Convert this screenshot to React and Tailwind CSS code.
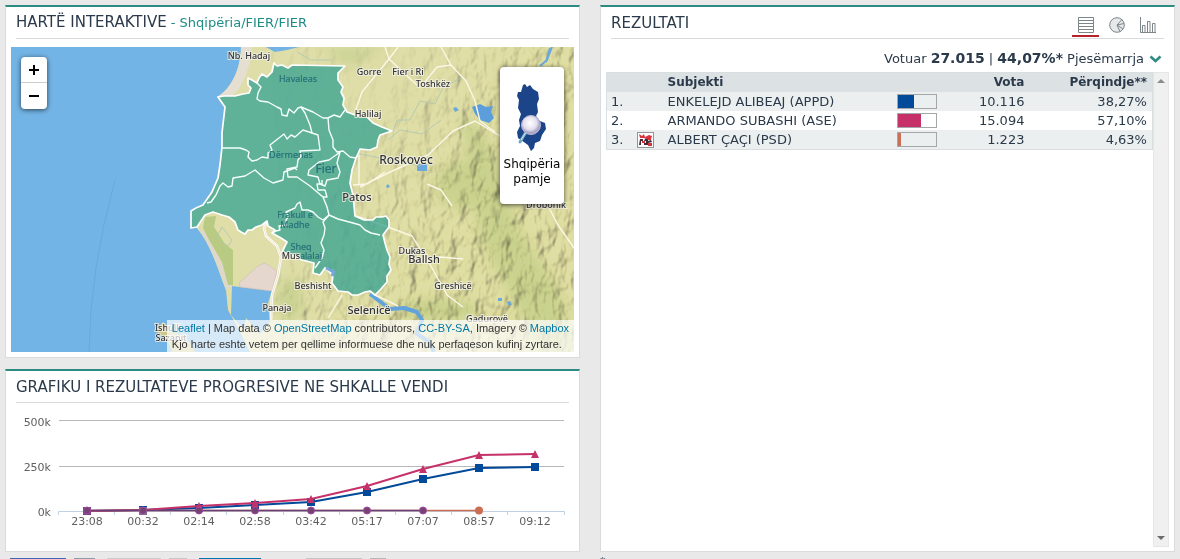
import React, { useState } from "react";

const results = [
  { name: "ENKELEJD ALIBEAJ (APPD)", votes: "10.116", percent: "38,27%", bar: 16, color: "#004a99" },
  { name: "ARMANDO SUBASHI (ASE)", votes: "15.094", percent: "57,10%", bar: 23, color: "#c63169" },
  { name: "ALBERT ÇAÇI (PSD)", votes: "1.223", percent: "4,63%", bar: 3, color: "#c8705a", logo: true },
];

const places = [
  { name: "Nb. Hadaj", x: 249, y: 59, size: 9 },
  { name: "Gorre", x: 369, y: 75, size: 9 },
  { name: "Fier i Ri", x: 408, y: 75, size: 9 },
  { name: "Toshkëz", x: 433, y: 87, size: 9 },
  { name: "Halilaj", x: 368, y: 117, size: 9 },
  { name: "Roskovec", x: 406, y: 164, size: 12 },
  { name: "Patos", x: 357, y: 201, size: 11 },
  { name: "Drobonik", x: 546, y: 208, size: 9 },
  { name: "Dukas", x: 412, y: 254, size: 9 },
  { name: "Ballsh", x: 424, y: 263, size: 11 },
  { name: "Greshicë", x: 453, y: 289, size: 9 },
  { name: "Beshisht", x: 313, y: 289, size: 9 },
  { name: "Selenicë", x: 369, y: 314, size: 11 },
  { name: "Panaja", x: 277, y: 311, size: 9 },
  { name: "Gadurovë", x: 487, y: 322, size: 9 },
  { name: "Ishulli", x: 168, y: 331, size: 9 },
  { name: "Sazanit", x: 171, y: 341, size: 9 },
  { name: "Mus", x: 291, y: 259, size: 9 },
];

const regionNames = [
  { name: "Havaleas", x: 298, y: 82, size: 9 },
  { name: "Dërmenas", x: 291, y: 158, size: 9 },
  { name: "Fier", x: 326, y: 173, size: 12 },
  { name: "Frakull e", x: 295, y: 218, size: 9 },
  { name: "Madhe", x: 295, y: 228, size: 9 },
  { name: "Sheq", x: 301, y: 250, size: 9 },
  { name: "alalaj", x: 311, y: 259, size: 9 },
];

const regionOutline =
  "M218 97L224 96L235 96L243 94L249 93L251 88L248 85V78L252 80L257 83L259 78L262 74L267 77L272 72L274 63L277 66L282 65L288 68L292 65L345 66L338 73L338 80L343 87L341 92L344 98L343 105L347 112L358 116L367 117L373 123L382 127L392 131L380 135L378 140L377 147L370 150L360 149L358 154L356 158L352 170L350 183L353 195L355 216L364 220L373 220L376 217L382 217L386 216L389 220L389 227L383 235L385 243L387 250L390 257L389 264L391 270L387 276L387 282L381 289L375 295L370 291L365 292L358 295L352 295L348 292L338 291L332 283L333 275L325 268L320 275L313 273L314 263L302 260L292 255L282 252L287 242L281 238L272 233L275 230L268 226L267 221L262 225L256 227L252 230H248L245 234L241 232L238 230L235 222L229 217L222 215L213 212L205 215L197 227L191 228V211L196 208L203 205L212 192L218 178L220 165L222 147V133L225 107Z";

const borders = [
  "M257 83L261 87L258 93L257 99L260 101L268 102L277 107L281 109L282 115L287 116L289 109L294 113L298 108L301 107L313 112L323 118L328 118L334 115L340 117L345 110",
  "M301 107L305 113L310 125L312 133L318 135L320 150L300 151L301 156L298 160L297 167L287 169L288 177L297 177L310 186L323 197L327 207L329 215",
  "M312 133L303 130L295 137L291 135L287 139L284 134L270 145L272 150L268 153V158L262 157L257 160L252 161L248 157L249 152L246 150L240 148H222",
  "M328 118L329 130L333 140L333 147L337 152L343 151L350 157L356 158",
  "M340 152L337 163L340 172L338 178L327 180L325 186L320 184L318 177L308 175L309 170L319 162L329 160L336 155Z",
  "M322 180V184H317L318 190L325 190L327 197L323 197",
  "M329 215L338 219L353 223L360 225L365 230L371 233L380 235",
  "M329 215L323 222L325 228L324 235L321 243L324 250L322 258L315 268",
  "M272 233L276 231L280 230L279 226L287 225L286 220L289 216L286 212L295 208L297 204L300 202L302 210L308 210L313 212L318 217L323 220L329 215",
  "M207 203L211 202L216 195L220 186L223 183L228 187L232 186L233 178L245 176L255 170L264 178L273 183L283 180L284 172L295 168L297 170",
];

const times = ["23:08", "00:32", "02:14", "02:58", "03:42", "05:17", "07:07", "08:57", "09:12"];
const reds = [511, 510, 506, 503, 499, 486, 469, 455, 454];
const blues = [511, 510, 508, 505, 502, 492, 479, 468, 467];
const xAt = (i) => 87 + i * 56;
const toPoints = (values) => values.map((y, i) => `${xAt(i)},${y}`).join(" ");

function Panel({ title, extra, tools, children }) {
  return (
    <section className="flex flex-col border border-t-2 border-[#d9dcdc] border-t-[#2e8b82] bg-white">
      <header className="mx-[10px] flex h-8 shrink-0 items-center justify-between border-b border-[#d9dcdc]">
        <h2 className="text-[15px] leading-4 whitespace-nowrap">
          {title}
          {extra}
        </h2>
        {tools}
      </header>
      {children}
    </section>
  );
}

function TerrainMap() {
  return (
    <svg viewBox="11 47 563 305" preserveAspectRatio="xMidYMid slice" className="block h-full w-full" role="img" aria-label="Harta e Fierit">
      <defs>
        <filter id="relief" x="0" y="0" width="100%" height="100%">
          <feTurbulence type="fractalNoise" baseFrequency="0.075 0.045" numOctaves="3" seed="8" />
          <feColorMatrix type="matrix" values="0 0 0 0 0  0 0 0 0 0  0 0 0 0 0  1 0 0 0 0" />
          <feDiffuseLighting surfaceScale="8" diffuseConstant="1.2" lightingColor="#fffae0">
            <feDistantLight azimuth="215" elevation="58" />
          </feDiffuseLighting>
        </filter>
        <linearGradient id="rise" gradientUnits="userSpaceOnUse" x1="345" y1="150" x2="460" y2="225">
          <stop offset="0" stopColor="#fff" stopOpacity="0.08" />
          <stop offset="1" stopColor="#fff" stopOpacity="0.5" />
        </linearGradient>
        <mask id="hills" maskUnits="userSpaceOnUse" x="11" y="47" width="563" height="305">
          <path d="M270 47H574V352H262L270 320L284 255Z" fill="url(#rise)" />
        </mask>
        <filter id="soft">
          <feGaussianBlur stdDeviation="6" />
        </filter>
      </defs>

      <rect x="11" y="47" width="563" height="305" fill="#73b4e6" />
      <path d="M115 180Q90 270 89 352" fill="none" stroke="#68a9db" />
      <path d="M241 47C241 70 230 90 217 97L225 107L222 147L218 178L205 205L191 212V228L196 227C212 246 218 270 226 290L228 310L237 326L250 352H574V47Z" fill="#dfdea9" />
      <path d="M241 47C241 70 230 90 217 97L232 96C243 87 250 69 252 47Z" fill="#e4dfd0" />
      <path d="M266 47L275 52L287 50L299 47Z" fill="#73b4e6" />
      <g filter="url(#soft)" fill="#bccb85" opacity="0.6">
        <path d="M460 110L490 140L520 230L560 290L574 352H540L480 240Z" />
        <ellipse cx="465" cy="185" rx="30" ry="25" />
        <ellipse cx="440" cy="310" rx="40" ry="12" />
        <path d="M320 50L390 47L350 65Z" />
        <ellipse cx="290" cy="300" rx="12" ry="22" />
      </g>
      <g style={{ mixBlendMode: "multiply" }}>
        <rect x="262" y="47" width="312" height="305" filter="url(#relief)" mask="url(#hills)" />
      </g>
      <path d="M197 227C212 246 218 270 226 290L232 286L222 262L205 232Z" fill="#ddd8c8" />
      <path d="M205 217L216 216L214 227L225 244L233 250V285H228L222 262L208 238L203 228Z" fill="#b9cb83" />
      <path d="M232 286L272 291L268 303L270 322L260 334L246 318L244 330L231 315Z" fill="#73b4e6" />
      <path d="M239 283L258 266L265 263L277 271L272 291L240 287Z" fill="#e5d6ce" stroke="#cdbdb7" strokeWidth="0.6" />
      <path d="M155 330L163 322L173 330L190 342L195 352H172L168 342Z" fill="#cbc88e" />
      <path d="M472 107L480 104L486 107L493 106L491 112L494 118L489 123L480 120L475 114Z" fill="#5c9edb" />
      <path d="M417 164H427V171H417ZM453 108L456 107L459 110L455 112ZM498 298H502V301H498ZM507 302L510 301L512 305H508ZM386 186L388 184L390 187L387 188Z" fill="#6ba8dc" />
      <path d="M552 47L547 60L540 66M550 48L546 62" fill="none" stroke="#6ba8dc" strokeWidth="2" />
      <path d="M370 294L382 303L390 309L404 308L417 312L422 320L417 334L428 341L434 352" fill="none" stroke="#62a3dc" strokeWidth="4" strokeLinejoin="round" />
      <g fill="none" stroke="#abc5b3" strokeWidth="0.8">
        <path d="M393 132L397 120L410 120L420 101L435 104L443 88L462 77M388 140L400 130L422 134L441 120M297 52L311 60H331M360 154L420 166L431 150" />
        <path d="M215 240L222 227L232 240L228 246L221 241" />
      </g>
      <g fill="none" stroke="#faf7e5" strokeWidth="1.4" strokeLinejoin="round">
        <path d="M398 47L389 59L362 92L355 112M389 59L420 88M389 59L385 47M441 47L451 65L466 81L475 101L480 121L495 132M451 65L437 67L425 82" />
        <path d="M360 187L390 172L428 155L453 131L475 121L510 142M353 185L367 184L385 172M356 216L385 226L412 236L432 268L447 295L463 307" />
        <path d="M415 259L440 257L463 259M427 184L441 190L452 206M342 295L328 318M375 295L398 306M545 200L558 225L574 248M359 155V185" />
      </g>
      <path d="M267 221L264 228L266 236L277 246L281 257L278 275L272 295L271 320" fill="none" stroke="#fff" strokeWidth="2.5" />
      <path d="M267 221L264 228L266 236L277 246L281 257L278 275L272 295L271 320" fill="none" stroke="#e5d7c1" strokeWidth="0.7" />

      <path d={regionOutline} fill="#32a090" fillOpacity="0.74" stroke="#fff" strokeWidth="1.7" strokeLinejoin="round" />
      {borders.map((d) => (
        <path key={d} d={d} fill="none" stroke="#f4fffb" strokeWidth="1.4" strokeLinejoin="round" />
      ))}
      <path d="M326 268L334 272L332 276" fill="none" stroke="#73a7d8" strokeWidth="3" />

      <g fontFamily="'Noto Sans', sans-serif" textAnchor="middle">
        {regionNames.map((p) => (
          <text key={p.name} x={p.x} y={p.y} fontSize={p.size} fill="#27717a" stroke="#27717a" strokeWidth="0.2">{p.name}</text>
        ))}
        {places.map((p) => (
          <text key={p.name} x={p.x} y={p.y} fontSize={p.size} fontWeight="500" fill="#33333b" stroke="#f4f2e4" strokeWidth="2" strokeOpacity="0.8" paintOrder="stroke">{p.name}</text>
        ))}
      </g>
    </svg>
  );
}

function AlbaniaIcon() {
  return (
    <svg viewBox="500 66 64 90" className="h-[90px] w-16" aria-hidden="true">
      <defs>
        <radialGradient id="lens" cx="45%" cy="40%">
          <stop offset="0" stopColor="#fff" />
          <stop offset="0.7" stopColor="#e3dfee" />
          <stop offset="1" stopColor="#aaa6c8" />
        </radialGradient>
      </defs>
      <path
        d="M523 84L525 83L527 86L530 84L533 88L538 91L539 98L537 103L538 111L536 115L540 120L545 122L546 128L542 134L540 140L535 142L534 147L531 150L528 144L521 139L518 137L517 131L520 125L519 119L521 113L518 107L519 99L517 95L518 91L521 91Z"
        fill="#1c4489"
      />
      <path d="M526 131L520 141" stroke="#6eaac4" strokeWidth="3" strokeLinecap="round" />
      <path d="M526 131L521 139" stroke="#d8edf2" strokeWidth="1" />
      <circle cx="531" cy="124" r="9.5" fill="url(#lens)" stroke="#bcb6d4" />
    </svg>
  );
}

function MapView() {
  return (
    <div className="relative mx-[5px] mt-2 mb-[5px] h-[305px] overflow-hidden">
      <TerrainMap />
      <div className="absolute top-[10px] left-[10px] flex w-[26px] flex-col overflow-hidden rounded bg-white font-bold text-black shadow-[0_1px_5px_rgba(0,0,0,0.65)]">
        <button type="button" aria-label="Zmadho" className="flex h-[26px] items-center justify-center border-b border-[#ccc]">
          <svg viewBox="0 0 12 12" className="h-3 w-3"><path d="M6 1V11M1 6H11" stroke="currentColor" strokeWidth="2" /></svg>
        </button>
        <button type="button" aria-label="Zvogëlo" className="flex h-[26px] items-center justify-center">
          <svg viewBox="0 0 12 12" className="h-3 w-3"><path d="M1 6H11" stroke="currentColor" strokeWidth="2" /></svg>
        </button>
      </div>
      <button type="button" className="absolute top-[20px] right-[10px] flex h-[137px] w-16 flex-col items-center rounded bg-white text-[12px] leading-[15px] text-black shadow-[0_1px_5px_rgba(0,0,0,0.65)]">
        <AlbaniaIcon />
        <span>Shqipëria<br />pamje</span>
      </button>
      <div className="absolute right-0 bottom-0 bg-white/70 px-[5px] font-['Liberation_Sans',Arial,sans-serif] text-[11px] leading-4 whitespace-nowrap text-[#333]">
        <p>
          <a href="#leaflet" className="text-[#0078a8]">Leaflet</a> | Map data ©{" "}
          <a href="#osm" className="text-[#0078a8]">OpenStreetMap</a> contributors,{" "}
          <a href="#license" className="text-[#0078a8]">CC-BY-SA</a>, Imagery ©{" "}
          <a href="#mapbox" className="text-[#0078a8]">Mapbox</a>
        </p>
        <p>Kjo harte eshte vetem per qellime informuese dhe nuk perfaqeson kufinj zyrtare.</p>
      </div>
    </div>
  );
}

function ProgressChart() {
  return (
    <svg viewBox="6 403 573 148" className="block w-full" role="img" aria-label="Rezultatet progresive">
      <path d="M59 420.5H564M59 466.5H564" stroke="#b8b8ba" />
      <path d="M58.5 515V511.5H564.5V515M114.5 511V515M170.5 511V515M226.5 511V515M283.5 511V515M339.5 511V515M395.5 511V515M451.5 511V515M507.5 511V515" fill="none" stroke="#c0d0e0" />
      <g fontFamily="'DejaVu Sans', Verdana, sans-serif" fontSize="11" fill="#606060">
        <text x="51" y="426" textAnchor="end">500k</text>
        <text x="51" y="471" textAnchor="end">250k</text>
        <text x="51" y="516" textAnchor="end">0k</text>
        {times.map((time, i) => (
          <text key={time} x={xAt(i)} y="525" textAnchor="middle">{time}</text>
        ))}
      </g>
      <polyline points={toPoints(blues)} fill="none" stroke="#004a99" strokeWidth="2" />
      {blues.map((y, i) => (
        <rect key={i} x={xAt(i) - 4} y={y - 4} width="8" height="8" fill="#004a99" />
      ))}
      <polyline points={toPoints(reds)} fill="none" stroke="#c63169" strokeWidth="2" />
      {reds.map((y, i) => (
        <path key={i} d={`M${xAt(i)} ${y - 4}l4 8h-8z`} fill="#c63169" />
      ))}
      <path d="M87 510.5H479" stroke="#cb6d50" strokeWidth="1.5" />
      <circle cx="479" cy="510.5" r="4" fill="#cb6d50" />
      <path d="M87 510.5H423" stroke="#6a3f78" strokeWidth="1.5" />
      <rect x="83" y="507" width="8" height="8" fill="#7d438b" />
      <rect x="139" y="507" width="8" height="8" fill="#83718f" />
      {times.slice(0, 7).map((time, i) => (
        <circle key={time} cx={xAt(i)} cy="510.5" r="3.5" fill="#754370" stroke="#a345a5" />
      ))}
    </svg>
  );
}

const viewIcons = {
  table: <path d="M.5.5H15.5V15.5H.5ZM.5 3.5H15.5M.5 6.5H15.5M.5 9.5H15.5M.5 12.5H15.5" />,
  pie: (
    <>
      <circle cx="8" cy="8" r="7.3" fill="#e6e9e9" />
      <path d="M13 2.5L8 8L14 12M8 8L11 14.5M8 8L15 6.5" />
    </>
  ),
  bars: <path d="M.5 0V15.5H16M2.5 15V8.5H5V15M7.5 15V4.5H10V15M12.5 15V6.5H15V15" />,
};

const viewNames = { table: "Tabela", pie: "Grafik rrethor", bars: "Histogram" };

function ViewSwitch() {
  const [view, setView] = useState("table");
  return (
    <div className="flex gap-1 self-end pr-[3px] pb-px">
      {Object.keys(viewIcons).map((key) => (
        <button
          key={key}
          type="button"
          aria-label={viewNames[key]}
          onClick={() => setView(key)}
          className={`flex w-[27px] justify-center border-b-2 pb-[2px] ${view === key ? "border-[#b5222a]" : "border-transparent"}`}
        >
          <svg viewBox="0 0 16 16" className="h-4 w-4" fill="none" stroke="#7d8589" strokeWidth="1">{viewIcons[key]}</svg>
        </button>
      ))}
    </div>
  );
}

function PartyLogo() {
  return (
    <svg viewBox="0 0 17 16" className="block h-4 w-[17px]" aria-hidden="true">
      <rect x=".5" y=".5" width="16" height="15" fill="#fff" stroke="#929496" />
      <path d="M2 2L5 4L7 2L8 5L12 3L15 4L14 7H9L7 6L3 6Z" fill="#d73440" />
      <path d="M3 7H6V9H4V13H2ZM8 7H11V9L14 8L15 10L11 11V13H7V11H9V9H7Z" fill="#412a33" />
      <path d="M5 9H8V11H5ZM11 11H15V14H11ZM11 7H14V8H11Z" fill="#d73440" />
    </svg>
  );
}

function ResultsTable() {
  return (
    <table className="w-full table-fixed border border-[#d9dee0] text-[13px] leading-[19px]">
      <colgroup>
        <col className="w-[30px]" />
        <col className="w-[31px]" />
        <col />
        <col className="w-[57px]" />
        <col className="w-[70px]" />
        <col className="w-[128px]" />
      </colgroup>
      <thead>
        <tr className="h-[19px] bg-[#dce1e4] text-[12px] font-bold">
          <th colSpan={2}></th>
          <th className="text-left">Subjekti</th>
          <th></th>
          <th className="text-right">Vota</th>
          <th className="pr-[5px] text-right">Përqindje**</th>
        </tr>
      </thead>
      <tbody>
        {results.map((row, i) => (
          <tr key={row.name} className="h-[19px] odd:bg-[#ebefef]">
            <td className="pl-1">{i + 1}.</td>
            <td>{row.logo && <PartyLogo />}</td>
            <td className="whitespace-nowrap">{row.name}</td>
            <td>
              <div className="h-[15px] w-10 border border-[#a3a7a8]">
                <div className="h-full" style={{ width: row.bar, backgroundColor: row.color }}></div>
              </div>
            </td>
            <td className="text-right">{row.votes}</td>
            <td className="pr-[5px] text-right">{row.percent}</td>
          </tr>
        ))}
      </tbody>
    </table>
  );
}

export default function App() {
  return (
    <div className="h-screen overflow-hidden bg-[#e9e9e9] px-[5px] pt-[5px] font-['DejaVu_Sans',Verdana,sans-serif] text-[#2b3a4a]">
      <main className="grid grid-cols-2 gap-5">
        <div className="flex flex-col gap-[11px]">
          <Panel
            title="HARTË INTERAKTIVE"
            extra={<span className="text-[13px] text-[#1e8c86]"> - <a href="#fier">Shqipëria/FIER/FIER</a></span>}
          >
            <MapView />
          </Panel>
          <Panel title="GRAFIKU I REZULTATEVE PROGRESIVE NE SHKALLE VENDI">
            <ProgressChart />
          </Panel>
        </div>

        <Panel title="REZULTATI" tools={<ViewSwitch />}>
          <div className="flex h-[33px] shrink-0 items-center justify-end gap-[5px] pt-[6px] pr-3 text-[13px]">
            <p className="whitespace-nowrap">
              Votuar <b className="text-[14px]">27.015</b> | <b className="text-[14px]">44,07%*</b> Pjesëmarrja
            </p>
            <button type="button" aria-label="Hap pjesëmarrjen">
              <svg viewBox="0 0 13 8" className="h-2 w-[13px]" fill="none" stroke="#2e8b82" strokeWidth="2.5"><path d="M1.5 1.5L6.5 6L11.5 1.5" /></svg>
            </button>
          </div>
          <div className="mr-[5px] mb-1 ml-[5px] flex grow">
            <div className="grow">
              <ResultsTable />
            </div>
            <div className="flex w-4 shrink-0 flex-col items-center justify-between border border-[#e6e6e6] bg-[#f0f0f0] py-[6px]">
              <svg viewBox="0 0 8 4" className="h-1 w-2" fill="#8b8b8b"><path d="M0 4L4 0L8 4Z" /></svg>
              <svg viewBox="0 0 8 4" className="h-1 w-2" fill="#6b6b6b"><path d="M0 0L4 4L8 0Z" /></svg>
            </div>
          </div>
        </Panel>
      </main>

      <footer className="grid grid-cols-2 gap-5 pt-1">
        <div className="flex pt-[2px] pl-[5px]">
          <button type="button" aria-label="Pëlqej" className="h-5 w-14 bg-[#4267b2]"></button>
          <span className="ml-2 h-5 w-[21px] bg-[#8d9aad]"></span>
          <button type="button" aria-label="Cicëro" className="ml-3 h-5 w-[54px] bg-[#cccccc]"></button>
          <span className="ml-2 h-5 w-[18px] bg-[#c6c6c6]"></span>
          <button type="button" aria-label="Shpërndaj" className="ml-3 h-5 w-[62px] bg-[#0077b5]"></button>
          <button type="button" aria-label="Rekomando" className="ml-[45px] h-5 w-14 bg-[#c4c4c4]"></button>
          <span className="ml-2 h-5 w-4 bg-[#b7b7b7]"></span>
        </div>
        <p className="text-[11px] leading-3">*</p>
      </footer>
    </div>
  );
}
